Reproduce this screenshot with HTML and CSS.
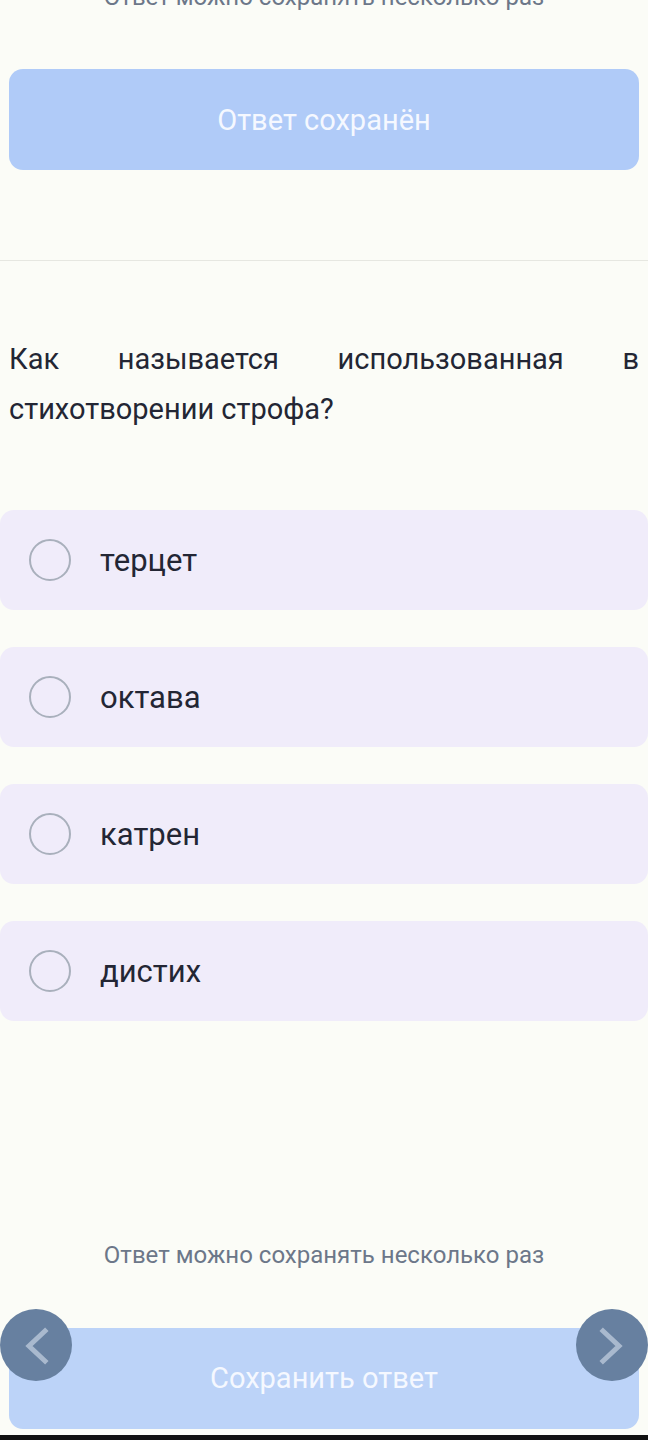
FILE: index.html
```html
<!DOCTYPE html>
<html lang="ru">
<head>
<meta charset="utf-8">
<link rel="stylesheet" href="styles.css">
</head>
<body>
<div class="page">
  <p class="hint hint-top">Ответ можно сохранять несколько раз</p>
  <div class="btn btn-saved">Ответ сохранён</div>
  <hr class="divider">
  <p class="question">Как называется использованная в стихотворении строфа?</p>
  <ul class="options">
    <li class="option"><span class="radio"></span><span class="label">терцет</span></li>
    <li class="option"><span class="radio"></span><span class="label">октава</span></li>
    <li class="option"><span class="radio"></span><span class="label">катрен</span></li>
    <li class="option"><span class="radio"></span><span class="label">дистих</span></li>
  </ul>
  <p class="hint hint-bottom">Ответ можно сохранять несколько раз</p>
  <div class="footer">
    <div class="btn btn-save">Сохранить ответ</div>
    <div class="nav nav-prev">
      <svg viewBox="0 0 72 72" width="72" height="72"><path d="M45 22 L29 37 L45 52" fill="none" stroke="#a9b9ce" stroke-width="5" stroke-linecap="square"/></svg>
    </div>
    <div class="nav nav-next">
      <svg viewBox="0 0 72 72" width="72" height="72"><path d="M27 22 L43 37 L27 52" fill="none" stroke="#a9b9ce" stroke-width="5" stroke-linecap="square"/></svg>
    </div>
  </div>
  <div class="sysbar"></div>
</div>
</body>
</html>
```
FILE: styles.css
```css
html, body {
  margin: 0;
  padding: 0;
  background: #fbfcf7;
}
body {
  font-family: Roboto, "Noto Sans", sans-serif;
  overflow: hidden;
}
.page {
  height: 1440px;
  display: flex;
  flex-direction: column;
}
.hint {
  margin: 0;
  font-size: 24px;
  line-height: 30px;
  color: #6c7789;
  text-align: center;
}
.hint-top {
  margin-top: -18px;
}
.btn {
  margin: 0 9px;
  height: 101px;
  border-radius: 14px;
  display: flex;
  align-items: center;
  justify-content: center;
  color: #f5f8ff;
}
.btn-saved {
  margin-top: 57px;
  background: #b0cbf8;
  font-size: 29px;
}
.divider {
  margin: 90px 0 0;
  border: 0;
  height: 1px;
  background: #e6e7e1;
}
.question {
  margin: 73px 9px 0;
  font-size: 29px;
  line-height: 50px;
  color: #232634;
  text-align: justify;
}
.options {
  list-style: none;
  margin: 76px 0 0;
  padding: 0;
  display: flex;
  flex-direction: column;
  gap: 37px;
}
.option {
  height: 100px;
  border-radius: 14px;
  background: #f0ecfa;
  display: flex;
  align-items: center;
  padding-left: 29px;
  gap: 29px;
}
.radio {
  width: 38px;
  height: 38px;
  border: 2.5px solid #a9b0bc;
  border-radius: 50%;
  flex: none;
}
.label {
  font-size: 31px;
  color: #232634;
}
.hint-bottom {
  margin-top: 219px;
}
.footer {
  position: relative;
  margin-top: 58px;
}
.btn-save {
  background: #bcd3f8;
  font-size: 29px;
  padding-bottom: 2px;
  box-sizing: border-box;
}
.nav {
  position: absolute;
  top: -19px;
  width: 72px;
  height: 72px;
  border-radius: 50%;
  background: #6780a0;
}
.nav svg {
  display: block;
}
.nav-prev {
  left: 0;
}
.nav-next {
  right: 0;
}
.sysbar {
  margin-top: 6px;
  flex: 1;
  background: #111;
}
```
